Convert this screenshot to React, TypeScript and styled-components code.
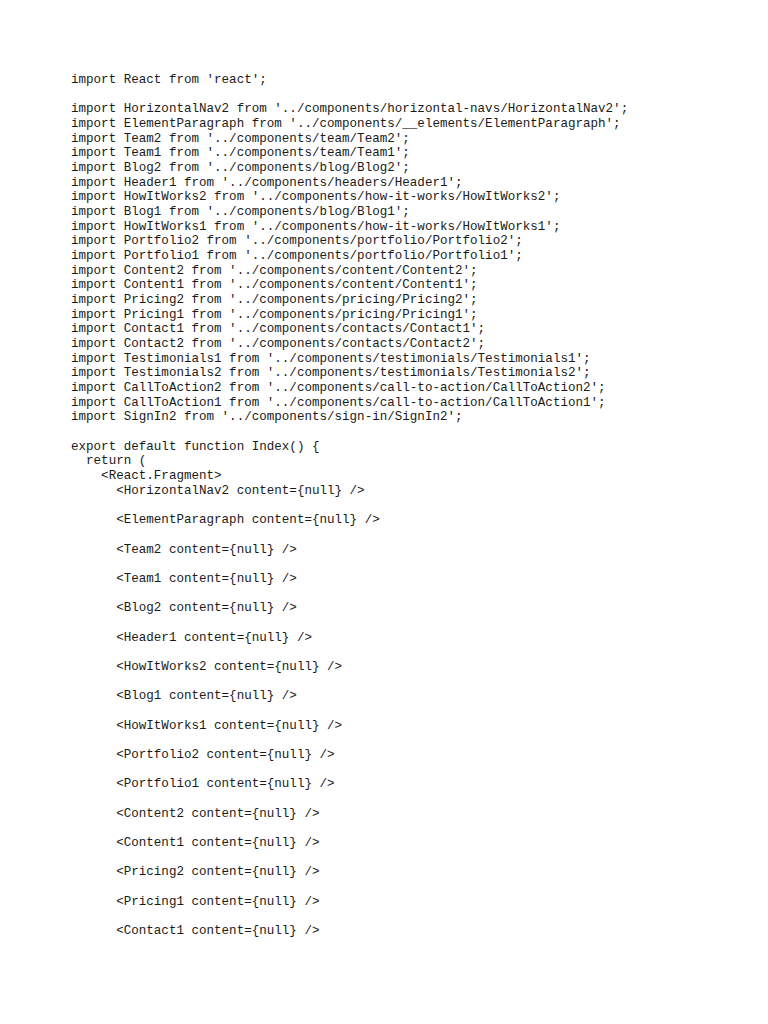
import React from 'react';
import styled, { createGlobalStyle } from 'styled-components';

const Global = createGlobalStyle`
  html, body { margin: 0; padding: 0; background: #ffffff; }
`;

const Page = styled.div`
  width: 768px;
  min-height: 1024px;
  background: #ffffff;
  padding: 73px 0 0 71px;
  box-sizing: border-box;
`;

const Code = styled.pre`
  margin: 0;
  font-family: "Liberation Mono", "Courier New", monospace;
  font-size: 12.55px;
  line-height: 14.67px;
  color: #1a1a1a;
  white-space: pre;
`;

const imports: [string, string][] = [
  ['HorizontalNav2', 'horizontal-navs/HorizontalNav2'],
  ['ElementParagraph', '__elements/ElementParagraph'],
  ['Team2', 'team/Team2'],
  ['Team1', 'team/Team1'],
  ['Blog2', 'blog/Blog2'],
  ['Header1', 'headers/Header1'],
  ['HowItWorks2', 'how-it-works/HowItWorks2'],
  ['Blog1', 'blog/Blog1'],
  ['HowItWorks1', 'how-it-works/HowItWorks1'],
  ['Portfolio2', 'portfolio/Portfolio2'],
  ['Portfolio1', 'portfolio/Portfolio1'],
  ['Content2', 'content/Content2'],
  ['Content1', 'content/Content1'],
  ['Pricing2', 'pricing/Pricing2'],
  ['Pricing1', 'pricing/Pricing1'],
  ['Contact1', 'contacts/Contact1'],
  ['Contact2', 'contacts/Contact2'],
  ['Testimonials1', 'testimonials/Testimonials1'],
  ['Testimonials2', 'testimonials/Testimonials2'],
  ['CallToAction2', 'call-to-action/CallToAction2'],
  ['CallToAction1', 'call-to-action/CallToAction1'],
  ['SignIn2', 'sign-in/SignIn2'],
];

const used = [
  'HorizontalNav2', 'ElementParagraph', 'Team2', 'Team1', 'Blog2', 'Header1',
  'HowItWorks2', 'Blog1', 'HowItWorks1', 'Portfolio2', 'Portfolio1', 'Content2',
  'Content1', 'Pricing2', 'Pricing1', 'Contact1',
];

const text = [
  "import React from 'react';",
  '',
  ...imports.map(([n, p]) => `import ${n} from '../components/${p}';`),
  '',
  'export default function Index() {',
  '  return (',
  '    <React.Fragment>',
  used.map((n) => `      <${n} content={null} />`).join('\n\n'),
].join('\n');

export default function App() {
  return (
    <>
      <Global />
      <Page>
        <Code>{text}</Code>
      </Page>
    </>
  );
}
